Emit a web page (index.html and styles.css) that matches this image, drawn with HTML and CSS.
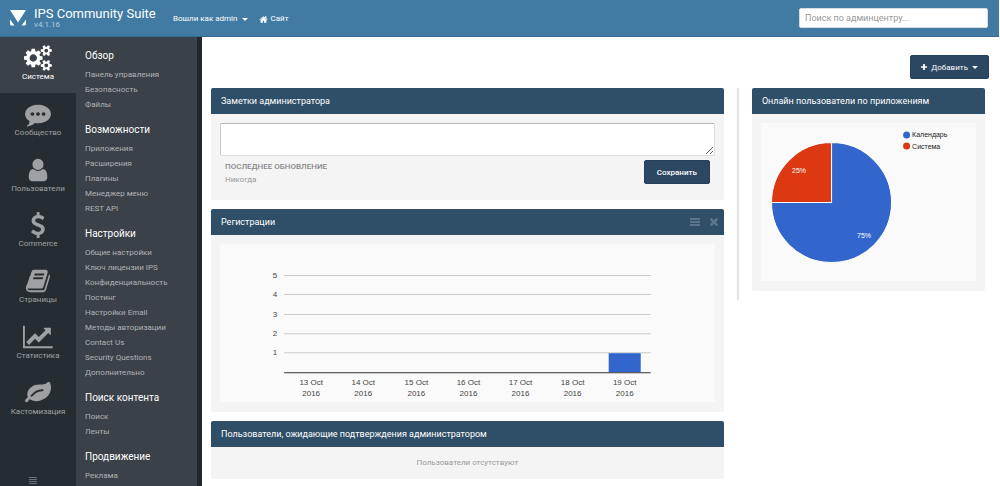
FILE: index.html
```html
<!DOCTYPE html>
<html lang="ru">
<head>
<meta charset="utf-8">
<title>IPS Community Suite</title>
<link rel="stylesheet" href="styles.css">
</head>
<body>
<header class="topbar">
  <a class="brand" href="#">
    <svg class="brand-logo" viewBox="0 0 16 16" aria-hidden="true"><path d="M0 0h16L8 12.500zM0 9.500L4.500 15.500H1.500Q0 15.500 0 14zM16 9.500L11.500 15.500H14.500Q16 15.500 16 14z"/></svg>
    <span class="brand-text"><span class="brand-name">IPS Community Suite</span><span class="brand-version">v4.1.16</span></span>
  </a>
  <nav class="userlinks">
    <a href="#">Вошли как admin <span class="caret"></span></a>
    <a href="#"><svg class="icon-home" viewBox="0 0 1792 1792" aria-hidden="true"><path d="M1472 992v480q0 26-19 45t-45 19h-384v-384h-256v384h-384q-26 0-45-19t-19-45v-480q0-1 .5-3t.5-3l575-474 575 474q1 2 1 6zm223-69l-62 74q-8 9-21 11h-3q-13 0-21-7l-692-577-692 577q-12 8-24 7-13-2-21-11l-62-74q-8-10-7-23.500t11-21.500l719-599q32-26 76-26t76 26l244 204v-195q0-14 9-23t23-9h192q14 0 23 9t9 23v408l219 182q10 8 11 21.500t-7 23.500z"/></svg>Сайт</a>
  </nav>
  <input class="search" type="search" placeholder="Поиск по админцентру..." aria-label="Поиск по админцентру">
</header>
<div class="shell">
  <nav class="apps">
    <ul class="app-list">
      <li><a class="app active" href="#"><svg viewBox="0 0 1920 1792" aria-hidden="true"><path d="M896 896q0-106-75-181t-181-75-181 75-75 181 75 181 181 75 181-75 75-181zm768 512q0-52-38-90t-90-38-90 38-38 90q0 53 37.500 90.500t90.500 37.500 90.500-37.500 37.500-90.500zm0-1024q0-52-38-90t-90-38-90 38-38 90q0 53 37.500 90.500t90.500 37.500 90.500-37.500 37.500-90.500zm-384 421v185q0 10-7 19.500t-16 10.500l-155 24q-11 35-32 76 34 48 90 115 7 11 7 20 0 12-7 19-23 30-82.500 89.500t-78.500 59.500q-11 0-21-7l-115-90q-37 19-77 31-11 108-23 155-7 24-30 24h-186q-11 0-20-7.500t-10-17.500l-23-153q-34-10-75-31l-118 89q-7 7-20 7-11 0-21-8-144-133-144-160 0-9 7-19 10-14 41-53t47-61q-23-44-35-82l-152-24q-10-1-17-9.500t-7-19.500v-185q0-10 7-19.500t16-10.500l155-24q11-35 32-76-34-48-90-115-7-11-7-20 0-12 7-20 22-30 82-89t79-59q11 0 21 7l115 90q34-18 77-32 11-108 23-154 7-24 30-24h186q11 0 20 7.500t10 17.500l23 153q34 10 75 31l118-89q8-7 20-7 11 0 21 8 144 133 144 160 0 8-7 19-12 16-42 54t-45 60q23 48 34 82l152 23q10 2 17 10.500t7 19.500zm640 533v140q0 16-149 31-12 27-30 52 51 113 51 138 0 4-4 7-122 71-124 71-8 0-46-47t-52-68q-20 2-30 2t-30-2q-14 21-52 68t-46 47q-2 0-124-71-4-3-4-7 0-25 51-138-18-25-30-52-149-15-149-31v-140q0-16 149-31 13-29 30-52-51-113-51-138 0-4 4-7 4-2 35-20t59-34 30-16q8 0 46 46.500t52 67.500q20-2 30-2t30 2q51-71 92-112l6-2q4 0 124 70 4 3 4 7 0 25-51 138 17 23 30 52 149 15 149 31zm0-1024v140q0 16-149 31-12 27-30 52 51 113 51 138 0 4-4 7-122 71-124 71-8 0-46-47t-52-68q-20 2-30 2t-30-2q-14 21-52 68t-46 47q-2 0-124-71-4-3-4-7 0-25 51-138-18-25-30-52-149-15-149-31v-140q0-16 149-31 13-29 30-52-51-113-51-138 0-4 4-7 4-2 35-20t59-34 30-16q8 0 46 46.500t52 67.500q20-2 30-2t30 2q51-71 92-112l6-2q4 0 124 70 4 3 4 7 0 25-51 138 17 23 30 52 149 15 149 31z"/></svg>Система</a></li>
      <li><a class="app" href="#"><svg viewBox="0 0 1792 1792" aria-hidden="true"><path d="M640 896q0-53-37.500-90.500t-90.500-37.500-90.500 37.500-37.500 90.500 37.500 90.500 90.500 37.500 90.500-37.500 37.500-90.500zm384 0q0-53-37.500-90.500t-90.500-37.500-90.500 37.500-37.500 90.500 37.500 90.500 90.500 37.500 90.500-37.500 37.500-90.500zm384 0q0-53-37.500-90.500t-90.500-37.500-90.500 37.500-37.500 90.500 37.500 90.500 90.500 37.500 90.500-37.500 37.500-90.500zm384 0q0 174-120 321.500t-326 233-450 85.500q-110 0-211-18-173 173-435 229-52 10-86 13-12 1-22-6t-13-18q-4-15 20-37 5-5 23.500-21.500t25.500-23.500 23.500-25.500 24-31.500 20.500-37 20-48 14.500-57.500 12.500-72.500q-146-90-229.500-216.500t-83.500-269.500q0-174 120-321.500t326-233 450-85.500 450 85.500 326 233 120 321.500z"/></svg>Сообщество</a></li>
      <li><a class="app" href="#"><svg viewBox="0 0 1792 1792" aria-hidden="true"><path d="M1536 1399q0 109-62.500 187t-150.500 78h-854q-88 0-150.500-78t-62.500-187q0-85 8.500-160.500t31.500-152 58.500-131 94-89 134.500-34.500q131 128 313 128t313-128q76 0 134.500 34.500t94 89 58.500 131 31.500 152 8.500 160.500zm-256-887q0 159-112.500 271.500t-271.500 112.500-271.500-112.500-112.500-271.500 112.500-271.500 271.500-112.500 271.500 112.500 112.500 271.500z"/></svg>Пользователи</a></li>
      <li><a class="app" href="#"><svg viewBox="0 0 1792 1792" aria-hidden="true"><path d="M1362 1185q0 153-99.500 263.500t-258.500 136.500v175q0 14-9 23t-23 9h-135q-13 0-22.500-9.500t-9.500-22.500v-175q-66-9-127.500-31t-101.500-44.500-74-48-46.500-37.500-17.500-18q-17-21-2-41l103-135q7-10 23-12 15-2 24 9l2 2q113 99 243 125 37 8 74 8 81 0 142.500-43t61.500-122q0-28-15-53t-33.500-42-58.500-37.500-66-32-80-32.500q-39-16-61.500-25t-61.500-26.500-62.500-31-56.500-35.500-53.500-42.500-43.500-49-35.500-58-21-66.500-8.500-78q0-138 98-242t255-134v-180q0-13 9.500-22.500t22.500-9.500h135q14 0 23 9t9 23v176q57 6 110.500 23t87 33.500 63.500 37.500 39 29 15 14q17 18 5 38l-81 146q-8 15-23 16-14 3-27-7-3-3-14.500-12t-39-26.500-58.500-32-74.500-26-85.500-11.500q-95 0-155 43t-60 111q0 26 8.500 48t29.500 41.500 39.500 33 56 31 60.500 27 70 27.500q53 20 81 31.500t76 35 75.500 42.500 62 50 53 63.500 31.500 76.500 13 94z"/></svg>Commerce</a></li>
      <li><a class="app" href="#"><svg viewBox="0 0 1792 1792" aria-hidden="true"><path d="M1703 478q40 57 18 129l-275 906q-19 64-76.500 107.500t-122.500 43.500h-923q-77 0-148.500-53.500t-99.500-131.500q-24-67-2-127 0-4 3-27t4-37q1-8-3-21.500t-3-19.500q2-11 8-21t16.500-23.500 16.500-23.500q23-38 45-91.500t30-91.500q3-10 .5-30t-.5-28q3-11 17-28t17-23q21-36 42-92t25-90q1-9-2.500-32t.5-28q4-13 22-30.500t22-22.500q19-26 42.500-84.500t27.500-96.500q1-8-3-25.500t-2-26.500q2-8 9-18t18-23 17-21q8-12 16.500-30.500t15-35 16-36 19.500-32 26.500-23.500 36-11.500 47.500 5.500l-1 3q38-9 51-9h761q74 0 114 56t18 130l-274 906q-36 119-71.500 153.500t-128.500 34.500h-869q-27 0-38 15-11 16-1 43 24 70 144 70h923q29 0 56-15.500t35-41.500l300-987q7-22 5-57 38 15 59 43zm-1064 2q-4 13 2 22.500t20 9.500h608q13 0 25.500-9.500t16.500-22.500l21-64q4-13-2-22.500t-20-9.500h-608q-13 0-25.500 9.500t-16.500 22.500zm-83 256q-4 13 2 22.500t20 9.500h608q13 0 25.500-9.500t16.500-22.500l21-64q4-13-2-22.500t-20-9.500h-608q-13 0-25.500 9.500t-16.500 22.500z"/></svg>Страницы</a></li>
      <li><a class="app" href="#"><svg viewBox="0 0 2048 1792" aria-hidden="true"><path d="M2048 1536v128h-2048v-1536h128v1408h1920zm-128-1248v435q0 21-19.500 29.500t-35.500-7.500l-121-121-633 633q-10 10-23 10t-23-10l-233-233-416 416-192-192 585-585q10-10 23-10t23 10l233 233 464-464-121-121q-16-16-7.500-35.500t29.500-19.500h435q14 0 23 9t9 23z"/></svg>Статистика</a></li>
      <li><a class="app" href="#"><svg viewBox="0 0 1792 1792" aria-hidden="true"><path d="M1280 704q0-26-19-45t-45-19q-172 0-318 49.500t-259.500 134-235.500 219.500q-19 21-19 45 0 26 19 45t45 19q24 0 45-19 27-24 74-71t67-66q137-124 268.500-176t313.500-52q26 0 45-19t19-45zm512-198q0 95-20 193-46 224-184.500 383t-357.500 268q-214 108-438 108-148 0-286-47-15-5-88-42t-96-37q-16 0-39.500 32t-45 70-52.500 70-60 32q-43 0-63.500-17.500t-45.500-59.500q-2-4-6-11t-5.500-10-3-9.500-1.500-13.500q0-35 31-73.500t68-65.500 68-56 31-48q0-4-14-38t-16-44q-9-51-9-104 0-115 43.500-220t119-184.500 170.500-139 204-95.500q55-18 145-25.500t179.500-9 178.500-6 163.500-24 113.500-56.500l29.500-29.500 29.500-28 27-20 36.500-16 43.500-4.500q39 0 70.500 46t47.500 112 24 124 8 96z"/></svg>Кастомизация</a></li>
    </ul>
    <button class="reorder" type="button" aria-label="Порядок меню"><svg viewBox="0 0 8 7" aria-hidden="true"><path d="M0 0h8v1H0zM0 2h8v1H0zM0 4h8v1H0zM0 6h8v1H0z"/></svg></button>
  </nav>
  <nav class="submenu">
    <section><h2>Обзор</h2><ul>
      <li><a href="#">Панель управления</a></li><li><a href="#">Безопасность</a></li><li><a href="#">Файлы</a></li></ul></section>
    <section><h2>Возможности</h2><ul>
      <li><a href="#">Приложения</a></li><li><a href="#">Расширения</a></li><li><a href="#">Плагины</a></li><li><a href="#">Менеджер меню</a></li><li><a href="#">REST API</a></li></ul></section>
    <section><h2>Настройки</h2><ul>
      <li><a href="#">Общие настройки</a></li><li><a href="#">Ключ лицензии IPS</a></li><li><a href="#">Конфиденциальность</a></li><li><a href="#">Постинг</a></li><li><a href="#">Настройки Email</a></li><li><a href="#">Методы авторизации</a></li><li><a href="#">Contact Us</a></li><li><a href="#">Security Questions</a></li><li><a href="#">Дополнительно</a></li></ul></section>
    <section><h2>Поиск контента</h2><ul>
      <li><a href="#">Поиск</a></li><li><a href="#">Ленты</a></li></ul></section>
    <section><h2>Продвижение</h2><ul>
      <li><a href="#">Реклама</a></li></ul></section>
  </nav>
  <main class="content">
    <div class="actions"><button class="btn btn-add" type="button"><svg class="icon-plus" viewBox="0 0 7 7" aria-hidden="true"><path d="M2.500 0h2v2.500H7v2H4.500V7h-2V4.500H0v-2h2.500z"/></svg>Добавить<span class="caret"></span></button></div>
    <div class="columns">
      <div class="stack">
        <section class="widget">
          <header class="widget-head"><h2>Заметки администратора</h2></header>
          <form class="widget-body">
            <textarea class="notes" aria-label="Заметки администратора"></textarea>
            <div class="notes-foot">
              <p class="updated"><strong>ПОСЛЕДНЕЕ ОБНОВЛЕНИЕ</strong><span>Никогда</span></p>
              <button class="btn" type="button">Сохранить</button>
            </div>
          </form>
        </section>
        <section class="widget">
          <header class="widget-head"><h2>Регистрации</h2>
            <div class="tools">
              <button type="button" aria-label="Переместить"><svg class="icon-bars" viewBox="0 0 10 8" aria-hidden="true"><path d="M0 0h10v2H0zM0 3h10v2H0zM0 6h10v2H0z"/></svg></button>
              <button type="button" aria-label="Закрыть"><svg class="icon-times" viewBox="302 366 1188 1188" aria-hidden="true"><path d="M1490 1322q0 40-28 68l-136 136q-28 28-68 28t-68-28l-294-294-294 294q-28 28-68 28t-68-28l-136-136q-28-28-28-68t28-68l294-294-294-294q-28-28-28-68t28-68l136-136q28-28 68-28t68 28l294 294 294-294q28-28 68-28t68 28l136 136q28 28 28 68t-28 68l-294 294 294 294q28 28 28 68z"/></svg></button>
            </div>
          </header>
          <div class="widget-body">
            <svg class="chart" viewBox="0 0 494 158" role="img" aria-label="Регистрации">
              <path class="grid" d="M64 31.500H430M64 50.500H430M64 70.500H430M64 89.500H430M64 108.500H430"/>
              <rect class="bar" x="388" y="109" width="32" height="19"/>
              <path class="axis" d="M64 128.500H430"/>
              <g class="ylabels"><text x="57" y="34">5</text><text x="57" y="53">4</text><text x="57" y="73">3</text><text x="57" y="92">2</text><text x="57" y="111">1</text></g>
              <g class="xlabels">
                <text x="91" y="141">13 Oct<tspan x="91" y="152">2016</tspan></text>
                <text x="143" y="141">14 Oct<tspan x="143" y="152">2016</tspan></text>
                <text x="196" y="141">15 Oct<tspan x="196" y="152">2016</tspan></text>
                <text x="248" y="141">16 Oct<tspan x="248" y="152">2016</tspan></text>
                <text x="300" y="141">17 Oct<tspan x="300" y="152">2016</tspan></text>
                <text x="352" y="141">18 Oct<tspan x="352" y="152">2016</tspan></text>
                <text x="404" y="141">19 Oct<tspan x="404" y="152">2016</tspan></text>
              </g>
            </svg>
          </div>
        </section>
        <section class="widget">
          <header class="widget-head"><h2>Пользователи, ожидающие подтверждения администратором</h2></header>
          <p class="empty">Пользователи отсутствуют</p>
        </section>
      </div>
      <div class="divider"></div>
      <section class="widget">
        <header class="widget-head"><h2>Онлайн пользователи по приложениям</h2></header>
        <div class="widget-body">
          <svg class="chart" viewBox="0 0 215 158" role="img" aria-label="Онлайн пользователи по приложениям">
            <path class="slice blue" d="M70.500 79.500V19.500A60 60 0 1 1 10.500 79.500z"/>
            <path class="slice red" d="M70.500 79.500H10.500A60 60 0 0 1 70.500 19.500z"/>
            <text class="percent" x="38" y="50">25%</text><text class="percent" x="103" y="115">75%</text>
            <circle class="blue" cx="145.500" cy="12" r="3.500"/><text class="legend" x="151" y="14">Календарь</text>
            <circle class="red" cx="145.500" cy="23" r="3.500"/><text class="legend" x="151" y="26">Система</text>
          </svg>
        </div>
      </section>
    </div>
  </main>
</div>
</body>
</html>
```
FILE: styles.css
```css
* { box-sizing: border-box; }
body { margin: 0; min-height: 100vh; display: flex; flex-direction: column; background: #fff; font-family: Roboto, "Liberation Sans", sans-serif; font-size: 8px; color: #333; }
ul { list-style: none; margin: 0; padding: 0; }
h2, p { margin: 0; font-weight: 400; }
a { color: inherit; text-decoration: none; }
button, input, textarea { font-family: inherit; }
svg { display: block; fill: currentColor; }

.topbar { display: flex; align-items: center; height: 37px; padding: 0 11px 0 10px; margin-right: 1px; background: #417ba4; border-bottom: 1px solid #35688d; color: #fff; }
.brand { display: flex; align-items: center; gap: 8px; width: 163px; }
.brand-logo { width: 16px; height: 16px; }
.brand-text { display: flex; flex-direction: column; }
.brand-name { font-size: 13px; line-height: 14px; }
.brand-version { font-size: 8px; line-height: 8px; color: #b3cbdc; }
.userlinks { display: flex; gap: 11px; flex: 1; padding-top: 2px; }
.userlinks a { display: flex; align-items: center; line-height: 12px; }
.caret { margin-left: 5px; border: 3px solid transparent; border-top-color: currentColor; border-bottom: 0; }
.icon-home { width: 9px; height: 9px; margin-right: 2px; }
.search { width: 189px; height: 20px; padding: 0 5px; border: 1px solid #d5dde3; border-radius: 2px; font-size: 9px; background: #fff; }
.search::placeholder { color: #999; }

.shell { display: flex; flex: 1; }
.apps { display: flex; flex-direction: column; width: 76px; background: #262d32; color: #9da1a4; }
.app-list { display: grid; grid-auto-rows: 1fr; flex: 1; }
.app { display: flex; flex-direction: column; align-items: center; height: 100%; padding-top: 8px; line-height: 12px; }
.app svg { height: 26px; }
.app.active { background: #3a4148; color: #fff; }
.reorder { display: flex; align-items: flex-end; justify-content: center; height: 59px; padding: 0 10px 2px 0; border: 0; background: none; color: #6a7075; }
.reorder svg { width: 8px; height: 7px; }
.submenu { display: flex; flex-direction: column; gap: 9px; width: 126px; padding: 10px 9px 0; background: #3a4148; border-right: 5px solid #22272b; color: #b0b3b6; }
.submenu h2 { font-size: 10px; line-height: 18px; color: #fff; margin-bottom: 2px; }
.submenu li { line-height: 15px; }

.content { flex: 1; min-width: 0; padding: 18px 15px 7px 9px; }
.actions { display: flex; justify-content: flex-end; margin: 0 -4px 9px 0; }
.btn { display: flex; align-items: center; height: 24px; padding: 0 12px; border: 1px solid #263f5a; border-radius: 2px; background: #2c4762; color: #fff; font-size: 8px; font-weight: 500; }
.btn-add { padding: 0 10px; font-weight: 400; }
.btn-add .caret { margin-left: 4px; }
.icon-plus { width: 6px; height: 6px; margin-right: 4px; }
.columns { display: grid; grid-template-columns: 11fr 2px 5fr; column-gap: 13px; align-items: start; }
.stack { display: grid; gap: 9px; min-width: 0; }
.widget { min-width: 0; border-radius: 2px; overflow: hidden; background: #f4f4f4; }
.widget-head { display: flex; align-items: center; justify-content: space-between; height: 26px; padding: 0 6px 0 10px; background: #2f4e67; color: #fff; }
.widget-head h2 { font-size: 9px; line-height: 12px; }
.widget-body { padding: 9px 9px 10px; }
.tools { display: flex; gap: 10px; }
.tools button { padding: 0; border: 0; background: none; color: #5c7489; }
.icon-bars { width: 10px; height: 8px; }
.icon-times { width: 8px; height: 8px; }
.notes { display: block; width: 100%; height: 33px; border: 1px solid #ddd; border-top-color: #b5b5b5; border-left-color: #c8c8c8; border-radius: 2px; background: #fff; }
.notes-foot { display: flex; align-items: flex-start; justify-content: space-between; padding: 4px 5px; }
.updated { display: flex; flex-direction: column; line-height: 13px; color: #999; }
.updated strong { font-weight: 500; color: #888; }
.divider { height: 212px; background: #e2e2e2; }
.empty { padding: 9px; text-align: center; line-height: 14px; color: #999; }

.chart { width: 100%; height: auto; background: #fafafa; font-family: "Liberation Sans", sans-serif; font-size: 8px; }
.chart text { fill: #444; }
.grid { stroke: #ccc; fill: none; }
.axis { stroke: #333; fill: none; }
.bar, .blue { fill: #3366cc; }
.red { fill: #dc3912; }
.slice { stroke: #fff; }
.ylabels { text-anchor: end; }
.xlabels, .percent { text-anchor: middle; }
.chart .legend { font-size: 7px; fill: #222; }
.chart .percent { font-size: 7px; fill: #fff; }
```
